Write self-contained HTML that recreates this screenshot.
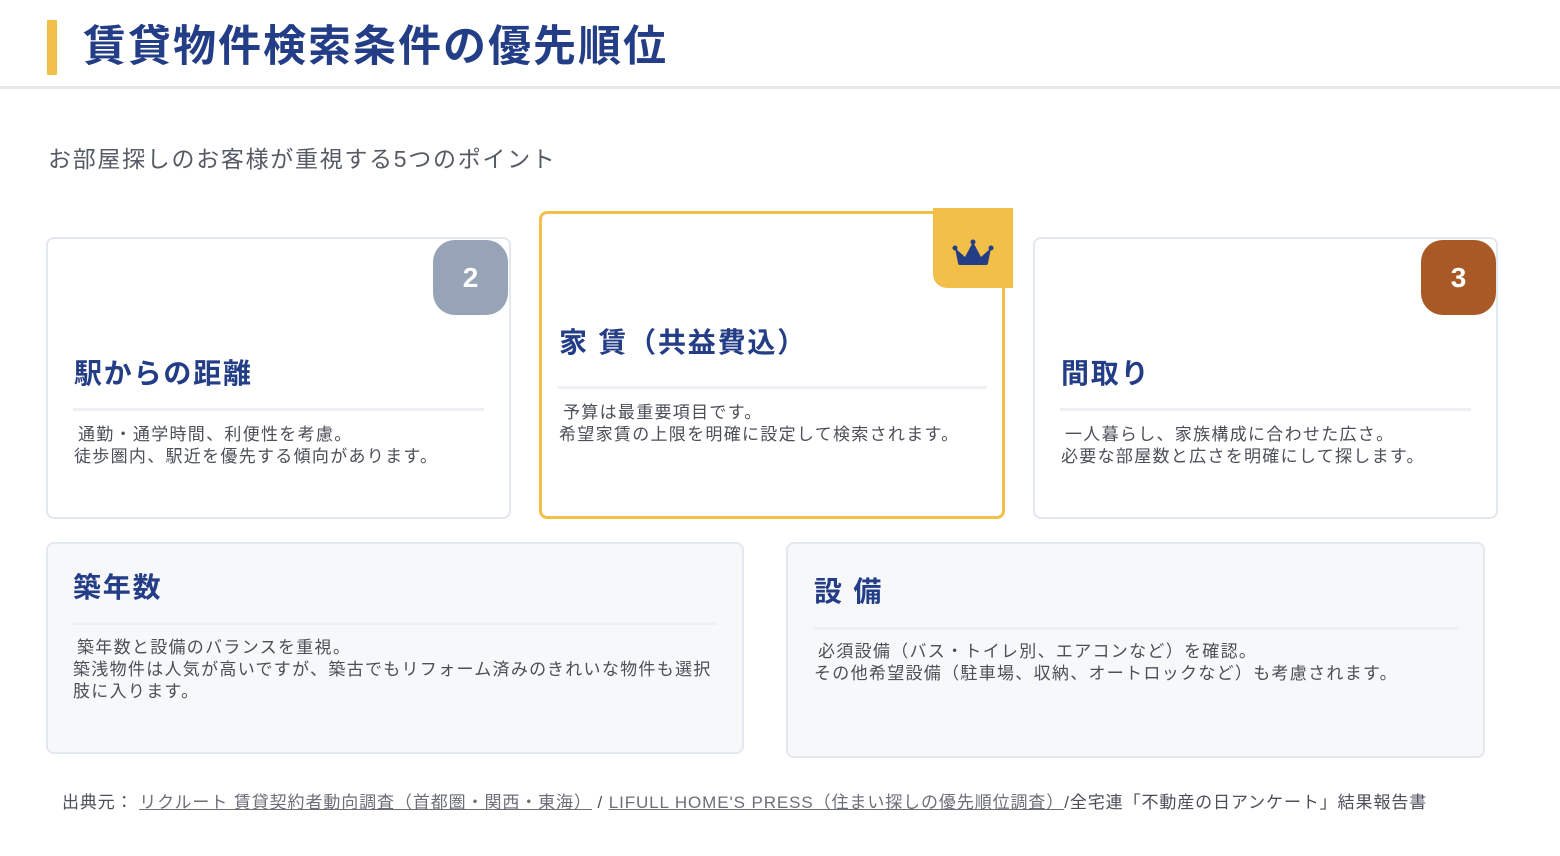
<!DOCTYPE html>
<html><head><meta charset="utf-8"><style>
*{margin:0;padding:0;box-sizing:border-box}
body{width:1560px;height:856px;background:#fff;font-family:"Liberation Sans","Noto Sans CJK JP",sans-serif;position:relative;overflow:hidden}
.a{position:absolute;white-space:nowrap}
.bar{left:47px;top:20px;width:10px;height:55px;background:#f2bf48}
h1{position:absolute;left:83px;top:17px;font-size:43px;font-weight:bold;color:#233d86;line-height:60px;letter-spacing:2px;white-space:nowrap}
.rule{left:0;top:86px;width:1560px;height:3px;background:#e5e7eb}
.sub{left:48px;top:143px;font-size:23px;color:#555b64;line-height:32px;letter-spacing:1.7px}
.card{position:absolute;border:2px solid #e3e7ee;border-radius:8px;background:#fff}
.g{background:#f7f8fa}
.t{position:absolute;font-size:28px;font-weight:bold;color:#233d86;line-height:36px;white-space:nowrap;letter-spacing:1.8px}
.hr{position:absolute;height:3px;background:#eef0f3}
.p{position:absolute;font-size:17px;color:#4b5058;line-height:22px;white-space:nowrap;letter-spacing:1.3px}
.p i{display:inline-block;width:4px}
.badge{position:absolute;width:75px;height:75px;border-radius:22px;color:#fff;font-size:28px;font-weight:bold;text-align:center;line-height:75px}
.src{left:62px;top:792px;font-size:17px;color:#4b5058;line-height:22px;letter-spacing:0.9px}
.src u{color:#6b6f76}
</style></head><body>
<div class="a bar"></div>
<h1>賃貸物件検索条件の優先順位</h1>
<div class="a rule"></div>
<div class="a sub">お部屋探しのお客様が重視する5つのポイント</div>

<div class="card" style="left:46px;top:237px;width:465px;height:282px"></div>
<div class="badge" style="left:433px;top:240px;background:#97a4b8">2</div>
<div class="t" style="left:74px;top:356px">駅からの距離</div>
<div class="hr" style="left:73px;top:408px;width:411px"></div>
<div class="p" style="left:74px;top:424px"><i></i>通勤・通学時間、利便性を考慮。<br>徒歩圏内、駅近を優先する傾向があります。</div>

<div class="card" style="left:539px;top:211px;width:466px;height:308px;border:3px solid #f2bf48"></div>
<div class="a" style="left:933px;top:208px;width:80px;height:80px;background:#f2bf48;border-bottom-left-radius:14px">
<svg width="80" height="80" viewBox="0 0 80 80"><path d="M22 40 L25 55 Q25 57 27 57 L53 57 Q55 57 55 55 L58 40 L48 49 L40 34 L32 49 Z" fill="#233d86"/><circle cx="22" cy="40" r="2.5" fill="#233d86"/><circle cx="40" cy="34" r="2.5" fill="#233d86"/><circle cx="58" cy="40" r="2.5" fill="#233d86"/></svg></div>
<div class="t" style="left:559px;top:325px">家 賃（共益費込）</div>
<div class="hr" style="left:558px;top:386px;width:429px"></div>
<div class="p" style="left:559px;top:402px"><i></i>予算は最重要項目です。<br>希望家賃の上限を明確に設定して検索されます。</div>

<div class="card" style="left:1033px;top:237px;width:465px;height:282px"></div>
<div class="badge" style="left:1421px;top:240px;background:#a95926">3</div>
<div class="t" style="left:1061px;top:356px">間取り</div>
<div class="hr" style="left:1060px;top:408px;width:411px"></div>
<div class="p" style="left:1061px;top:424px"><i></i>一人暮らし、家族構成に合わせた広さ。<br>必要な部屋数と広さを明確にして探します。</div>

<div class="card g" style="left:46px;top:542px;width:698px;height:212px"></div>
<div class="t" style="left:73px;top:570px">築年数</div>
<div class="hr" style="left:73px;top:622px;width:644px"></div>
<div class="p" style="left:73px;top:637px"><i></i>築年数と設備のバランスを重視。<br>築浅物件は人気が高いですが、築古でもリフォーム済みのきれいな物件も選択<br>肢に入ります。</div>

<div class="card g" style="left:786px;top:542px;width:699px;height:216px"></div>
<div class="t" style="left:814px;top:574px">設 備</div>
<div class="hr" style="left:814px;top:627px;width:644px"></div>
<div class="p" style="left:814px;top:641px"><i></i>必須設備（バス・トイレ別、エアコンなど）を確認。<br>その他希望設備（駐車場、収納、オートロックなど）も考慮されます。</div>

<div class="a src">出典元： <u>リクルート 賃貸契約者動向調査（首都圏・関西・東海）</u> / <u>LIFULL HOME'S PRESS（住まい探しの優先順位調査）</u>/全宅連「不動産の日アンケート」結果報告書</div>
</body></html>
